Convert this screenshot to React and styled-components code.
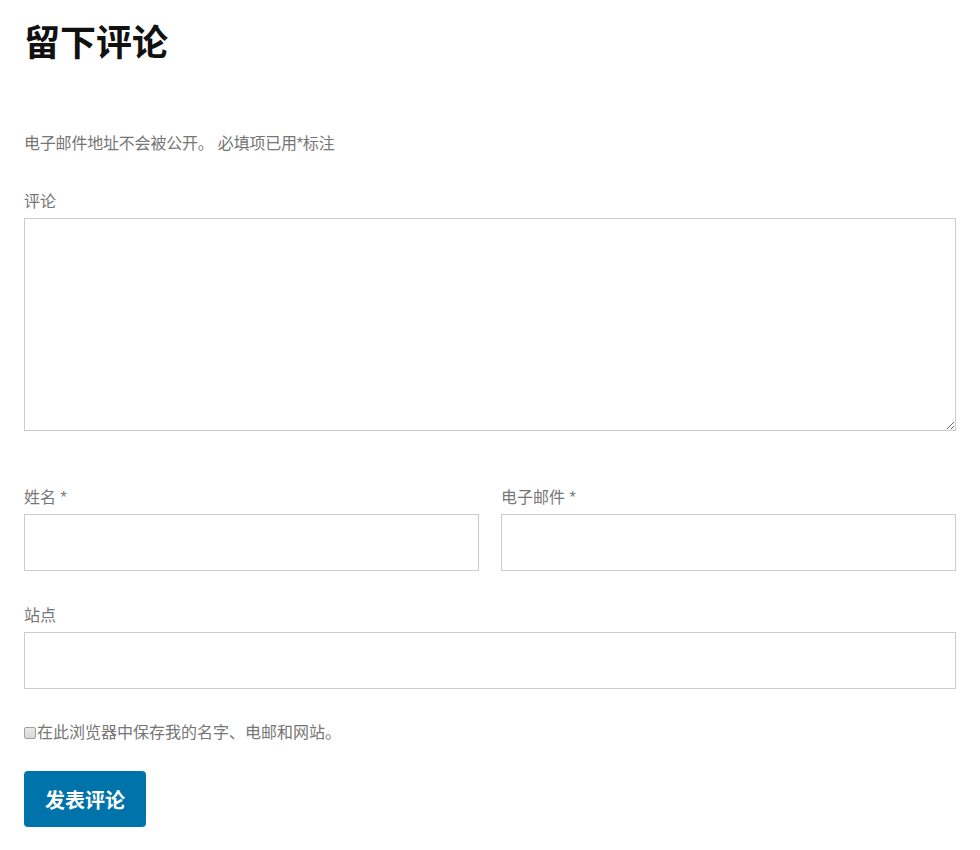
import React from 'react'
import { styled, createGlobalStyle } from 'styled-components'

const FONT = '"Liberation Sans", "Noto Sans CJK SC", sans-serif'

const GlobalStyle = createGlobalStyle`
  body {
    margin: 0;
    background: #fff;
    font-family: ${FONT};
  }
`

const S = {
  Wrapper: styled.div`
    padding: 20px 24px 24px;
  `,
  Title: styled.h3`
    margin: 0;
    font-size: 36px;
    line-height: 48px;
    font-weight: 700;
    color: #111;
  `,
  Form: styled.form`
    display: flex;
    flex-direction: column;
    margin-top: 64px;
  `,
  Note: styled.p`
    margin: 0 0 34px;
    font-size: 16px;
    line-height: 24px;
    color: #767676;
    letter-spacing: -0.2px;
  `,
  Row: styled.div`
    display: grid;
    grid-template-columns: ${({ $cols }) => ($cols === 2 ? '1fr 1fr' : '1fr')};
    gap: 22px;
    margin-bottom: ${({ $gap }) => $gap}px;
  `,
  Field: styled.div`
    display: flex;
    flex-direction: column;
  `,
  Label: styled.label`
    font-size: 16px;
    line-height: 24px;
    color: #767676;
    margin-bottom: 4px;
  `,
  Input: styled.input`
    box-sizing: border-box;
    height: 57px;
    width: 100%;
    border: 1px solid #ccc;
    background: #fff;
    font-family: ${FONT};
    font-size: 16px;
    padding: 0 12px;
  `,
  TextArea: styled.textarea`
    box-sizing: border-box;
    height: 213px;
    width: 100%;
    border: 1px solid #ccc;
    background: #fff;
    font-family: ${FONT};
    font-size: 16px;
    padding: 12px;
    display: block;
  `,
  Consent: styled.label`
    display: flex;
    align-items: center;
    font-size: 16px;
    line-height: 24px;
    color: #767676;
    margin-bottom: 26px;
  `,
  Check: styled.input`
    appearance: none;
    box-sizing: border-box;
    margin: 0 1px 0 0;
    width: 12px;
    height: 12px;
    border: 1px solid #a0a0a0;
    border-radius: 2px;
    background: linear-gradient(#e8e8e8, #d8d8d8);
  `,
  Submit: styled.button`
    align-self: flex-start;
    background: #0073aa;
    color: #fff;
    border: none;
    border-radius: 4px;
    font-family: ${FONT};
    font-size: 20px;
    font-weight: 700;
    height: 56px;
    padding: 0 21px;
  `,
}

const App = () => {
  return (
    <S.Wrapper>
      <GlobalStyle />
      <S.Title>留下评论</S.Title>
      <S.Form onSubmit={(e) => e.preventDefault()}>
        <S.Note>电子邮件地址不会被公开。 必填项已用*标注</S.Note>

        <S.Row $gap={55}>
          <S.Field>
            <S.Label htmlFor="comment">评论</S.Label>
            <S.TextArea id="comment" />
          </S.Field>
        </S.Row>

        <S.Row $cols={2} $gap={33}>
          <S.Field>
            <S.Label htmlFor="author">姓名 *</S.Label>
            <S.Input id="author" type="text" />
          </S.Field>
          <S.Field>
            <S.Label htmlFor="email">电子邮件 *</S.Label>
            <S.Input id="email" type="email" />
          </S.Field>
        </S.Row>

        <S.Row $gap={32}>
          <S.Field>
            <S.Label htmlFor="url">站点</S.Label>
            <S.Input id="url" type="url" />
          </S.Field>
        </S.Row>

        <S.Consent>
          <S.Check type="checkbox" />
          在此浏览器中保存我的名字、电邮和网站。
        </S.Consent>

        <S.Submit type="submit">发表评论</S.Submit>
      </S.Form>
    </S.Wrapper>
  )
}

export default App
